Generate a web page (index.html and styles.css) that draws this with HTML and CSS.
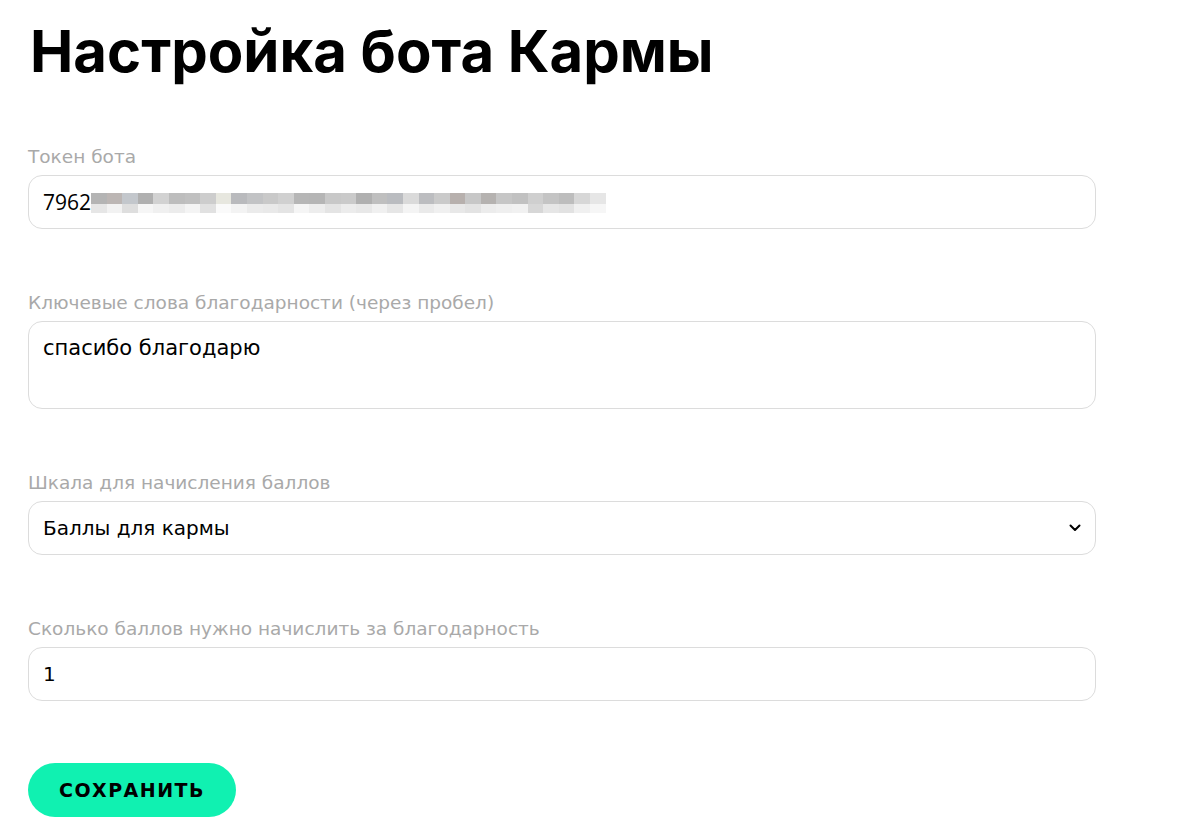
FILE: index.html
```html
<!DOCTYPE html>
<html lang="ru">
<head>
<meta charset="utf-8">
<title>Настройка бота Кармы</title>
<link rel="stylesheet" href="styles.css">
</head>
<body>
<main class="page">
  <h1 class="title">Настройка бота Кармы</h1>
  <form class="form">
    <div class="field">
      <label class="label">Токен бота</label>
      <div class="input token">
        <span class="token-text">7962</span>
        <span class="mosaic">
          <span class="m-row top">
            <i style="background:#b4b4b4"></i><i style="background:#bcb6b4"></i><i style="background:#c3c7cc"></i><i style="background:#b0b0b0"></i><i style="background:#d2d2d2"></i><i style="background:#bdbdbd"></i><i style="background:#c0c0c0"></i><i style="background:#cdcdcd"></i><i style="background:#e7e7df"></i><i style="background:#b9babd"></i><i style="background:#c2c3c5"></i><i style="background:#c9c9c9"></i><i style="background:#d0d0d0"></i><i style="background:#b6b6b6"></i><i style="background:#b5b5b5"></i><i style="background:#c8c8c8"></i><i style="background:#cacaca"></i><i style="background:#b0b0b0"></i><i style="background:#bfbfbf"></i><i style="background:#babcc0"></i><i style="background:#dadada"></i><i style="background:#bcbdc0"></i><i style="background:#cacaca"></i><i style="background:#b7b0ad"></i><i style="background:#c7c7c7"></i><i style="background:#b5b2b0"></i><i style="background:#c6c6c6"></i><i style="background:#c1c1c1"></i><i style="background:#cfcfcf"></i><i style="background:#c4c4c4"></i><i style="background:#bdbdbd"></i><i style="background:#d7d7d7"></i><i style="background:#e6e6e6"></i>
          </span>
          <span class="m-row bottom">
            <i style="background:#e6e6e6"></i><i style="background:#f2f2f2"></i><i style="background:#dedede"></i><i style="background:#f6f6f6"></i><i style="background:#f0f0f0"></i><i style="background:#ececec"></i><i style="background:#f4f4f4"></i><i style="background:#e1e1e1"></i><i style="background:#fafafa"></i><i style="background:#f3f3f3"></i><i style="background:#ebebeb"></i><i style="background:#e9e9e9"></i><i style="background:#e4e4e4"></i><i style="background:#f5f5f5"></i><i style="background:#ededed"></i><i style="background:#e4e4e4"></i><i style="background:#ececec"></i><i style="background:#e8e8e8"></i><i style="background:#f0f0f0"></i><i style="background:#e6e6e6"></i><i style="background:#f4f4f4"></i><i style="background:#eaeaea"></i><i style="background:#f0f0f0"></i><i style="background:#e8e8e8"></i><i style="background:#e3e3e3"></i><i style="background:#ececec"></i><i style="background:#efefef"></i><i style="background:#f1f1f1"></i><i style="background:#d7d7d7"></i><i style="background:#e6e6e6"></i><i style="background:#e2e2e2"></i><i style="background:#f0f0f0"></i><i style="background:#f6f6f6"></i>
          </span>
        </span>
      </div>
    </div>
    <div class="field">
      <label class="label">Ключевые слова благодарности (через пробел)</label>
      <div class="input area">спасибо благодарю</div>
    </div>
    <div class="field">
      <label class="label">Шкала для начисления баллов</label>
      <div class="input select">
        <span class="select-text">Баллы для кармы</span>
        <svg class="chevron" width="12" height="8" viewBox="0 0 12 8"><path d="M1.5 1.5 L6 6 L10.5 1.5" fill="none" stroke="#000" stroke-width="2" stroke-linecap="round" stroke-linejoin="round"/></svg>
      </div>
    </div>
    <div class="field">
      <label class="label">Сколько баллов нужно начислить за благодарность</label>
      <div class="input">1</div>
    </div>
    <div class="actions">
      <button type="button" class="btn">СОХРАНИТЬ</button>
    </div>
  </form>
</main>
</body>
</html>
```

FILE: styles.css
```css
html, body {
  margin: 0;
  padding: 0;
  background: #fff;
}
.page {
  padding: 0 104px 0 28px;
  font-family: "DejaVu Sans", "Open Sans", sans-serif;
  color: #000;
}
.title {
  margin: 0;
  padding: 16px 0 0 2px;
  font-family: "Inter", "DejaVu Sans", sans-serif;
  font-weight: 700;
  font-size: 58px;
  line-height: 70px;
  letter-spacing: 0;
}
.form {
  margin-top: 59px;
  display: flex;
  flex-direction: column;
}
.field {
  display: flex;
  flex-direction: column;
  margin-bottom: 62px;
}
.label {
  color: #a9a9a9;
  font-size: 18.5px;
  line-height: 24px;
  margin-bottom: 6px;
}
.input {
  box-sizing: border-box;
  height: 54px;
  border: 1px solid #dcdcdc;
  border-radius: 14px;
  padding: 0 14px;
  display: flex;
  align-items: center;
  font-family: "DejaVu Sans", sans-serif;
  font-size: 20px;
  color: #000;
}
.area {
  height: 88px;
  align-items: flex-start;
  padding-top: 14px;
  font-size: 21px;
}
.token {
  font-family: "Open Sans", sans-serif;
  font-size: 21px;
}
.token-text { display: inline-block; }
.mosaic {
  display: flex;
  flex-direction: column;
  margin-top: 2px;
}
.m-row {
  display: flex;
  height: 11px;
}
.m-row.bottom { height: 9px; }
.m-row i {
  display: block;
  width: 15.6px;
  height: 100%;
}
.select {
  justify-content: space-between;
  padding-right: 14px;
}
.chevron { display: block; }
.btn {
  width: 208px;
  height: 54px;
  border: none;
  border-radius: 27px;
  background: #10f1b1;
  color: #000;
  font-family: "DejaVu Sans", sans-serif;
  font-weight: 700;
  font-size: 19px;
  letter-spacing: 1.5px;
  cursor: pointer;
}
```
